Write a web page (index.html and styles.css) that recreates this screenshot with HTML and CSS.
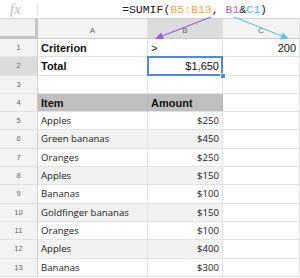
FILE: index.html
```html
<!DOCTYPE html>
<html lang="en">
<head>
    <meta charset="UTF-8">
    <meta name="viewport" content="width=device-width, initial-scale=1.0">
    <title>SUMIF example</title>
    <link rel="stylesheet" href="styles.css">
</head>
<body>
    <div id="sheet">
        <div class="formula-bar">
            <div class="fx">fx</div>
            <div class="formula">=SUMIF(<span class="ref-range">B5:B13</span>, <span class="ref-b">B1</span>&amp;<span class="ref-c">C1</span>)</div>
        </div>
        <div class="grid">
            <div class="corner"></div>
            <div class="col-head">A</div>
            <div class="col-head active">B</div>
            <div class="col-head">C</div>

            <div class="row-head">1</div>
            <div class="cell bold">Criterion</div>
            <div class="cell">&gt;</div>
            <div class="cell num">200</div>

            <div class="row-head active">2</div>
            <div class="cell bold">Total</div>
            <div class="cell num selected">$1,650</div>
            <div class="cell"></div>

            <div class="row-head">3</div>
            <div class="cell"></div>
            <div class="cell"></div>
            <div class="cell"></div>

            <div class="row-head">4</div>
            <div class="cell bold title">Item</div>
            <div class="cell bold title">Amount</div>
            <div class="cell"></div>

            <div class="row-head">5</div>
            <div class="cell data">Apples</div>
            <div class="cell data num">$250</div>
            <div class="cell"></div>

            <div class="row-head">6</div>
            <div class="cell data alt">Green bananas</div>
            <div class="cell data num alt">$450</div>
            <div class="cell"></div>

            <div class="row-head">7</div>
            <div class="cell data">Oranges</div>
            <div class="cell data num">$250</div>
            <div class="cell"></div>

            <div class="row-head">8</div>
            <div class="cell data alt">Apples</div>
            <div class="cell data num alt">$150</div>
            <div class="cell"></div>

            <div class="row-head">9</div>
            <div class="cell data">Bananas</div>
            <div class="cell data num">$100</div>
            <div class="cell"></div>

            <div class="row-head">10</div>
            <div class="cell data alt">Goldfinger bananas</div>
            <div class="cell data num alt">$150</div>
            <div class="cell"></div>

            <div class="row-head">11</div>
            <div class="cell data">Oranges</div>
            <div class="cell data num">$100</div>
            <div class="cell"></div>

            <div class="row-head">12</div>
            <div class="cell data alt">Apples</div>
            <div class="cell data num alt">$400</div>
            <div class="cell"></div>

            <div class="row-head">13</div>
            <div class="cell data">Bananas</div>
            <div class="cell data num">$300</div>
            <div class="cell"></div>
        </div>
        <!-- arrows from the formula refs down to the column headers -->
        <svg class="arrows" width="300" height="45" viewBox="0 0 300 45">
            <line x1="211" y1="17" x2="162" y2="36" stroke="#9d5fd3" stroke-width="1.3"/>
            <polygon points="155,39 161,32.5 164,39" fill="#9d5fd3"/>
            <line x1="234" y1="17" x2="282" y2="36" stroke="#5cc6ec" stroke-width="1.3"/>
            <polygon points="289,39 280,39.5 283,32.5" fill="#5cc6ec"/>
        </svg>
    </div>
</body>
</html>
```

FILE: styles.css
```css
body {
    margin: 0;
    background-color: #fff;
    font-family: "Liberation Sans", Arial, sans-serif;
}
#sheet {
    position: relative;
    width: 300px;
    height: 278px;
    overflow: hidden;
}
.formula-bar {
    display: flex;
    height: 19px;
    box-sizing: border-box;
    border-bottom: 1px solid #d0d0d0;
}
.fx {
    width: 38px;
    box-sizing: border-box;
    padding: 1px 0 0 10px;
    font-family: "Liberation Serif", serif;
    font-style: italic;
    font-size: 15px;
    line-height: 16px;
    color: #bdbdbd;
    position: relative;
}
.fx::after {
    content: "";
    position: absolute;
    right: 0;
    top: 3px;
    height: 12px;
    border-right: 1px solid #e0e0e0;
}
.formula {
    flex: 1;
    padding-left: 84px;
    font-family: "Liberation Mono", monospace;
    font-size: 11.5px;
    line-height: 19px;
    color: #222;
    white-space: nowrap;
}
.ref-range {
    color: #f5a742;
}
.ref-b {
    color: #a765d6;
}
.ref-c {
    color: #3fb8e3;
}
.grid {
    display: grid;
    grid-template-columns: 38px 110px 75px 77px;
    grid-template-rows: 20px repeat(13, 18.3px);
}
.grid > div {
    box-sizing: border-box;
    border-right: 1px solid #e2e2e2;
    border-bottom: 1px solid #e2e2e2;
    white-space: nowrap;
    overflow: hidden;
}
.corner {
    background-color: #f0f0f0;
    border-right: 3px solid #c4c4c4 !important;
    border-bottom: 3px solid #c4c4c4 !important;
}
.col-head {
    background-color: #f3f3f3;
    border-bottom: 1px solid #c8c8c8 !important;
    color: #666;
    font-size: 8px;
    text-align: center;
    line-height: 23px;
}
.row-head {
    background-color: #f3f3f3;
    border-right: 1px solid #cfcfcf !important;
    color: #666;
    font-size: 7.5px;
    text-align: center;
    line-height: 18px;
}
.col-head.active,
.row-head.active {
    background-color: #dcdcdc;
}
.cell {
    padding: 0 3px;
    font-size: 11px;
    line-height: 18px;
    color: #111;
}
.cell.bold {
    font-weight: bold;
}
.cell.num {
    text-align: right;
}
.cell.title {
    background-color: #bfbfbf;
    border-right-color: #b5b5b5;
}
.cell.data {
    font-family: "Open Sans", sans-serif;
    font-size: 9.6px;
    color: #222;
}
.cell.alt {
    background-color: #f2f2f2;
}
.cell.selected {
    position: relative;
    overflow: visible !important;
}
.cell.selected::before {
    content: "";
    position: absolute;
    left: -1px;
    top: -1px;
    right: -1px;
    bottom: -1px;
    border: 2px solid #4a89f0;
}
.cell.selected::after {
    content: "";
    position: absolute;
    right: -4px;
    bottom: -4px;
    width: 6px;
    height: 6px;
    background-color: #4a89f0;
    border: 1px solid #fff;
    box-sizing: border-box;
}
.arrows {
    position: absolute;
    left: 0;
    top: 0;
    pointer-events: none;
}
```
